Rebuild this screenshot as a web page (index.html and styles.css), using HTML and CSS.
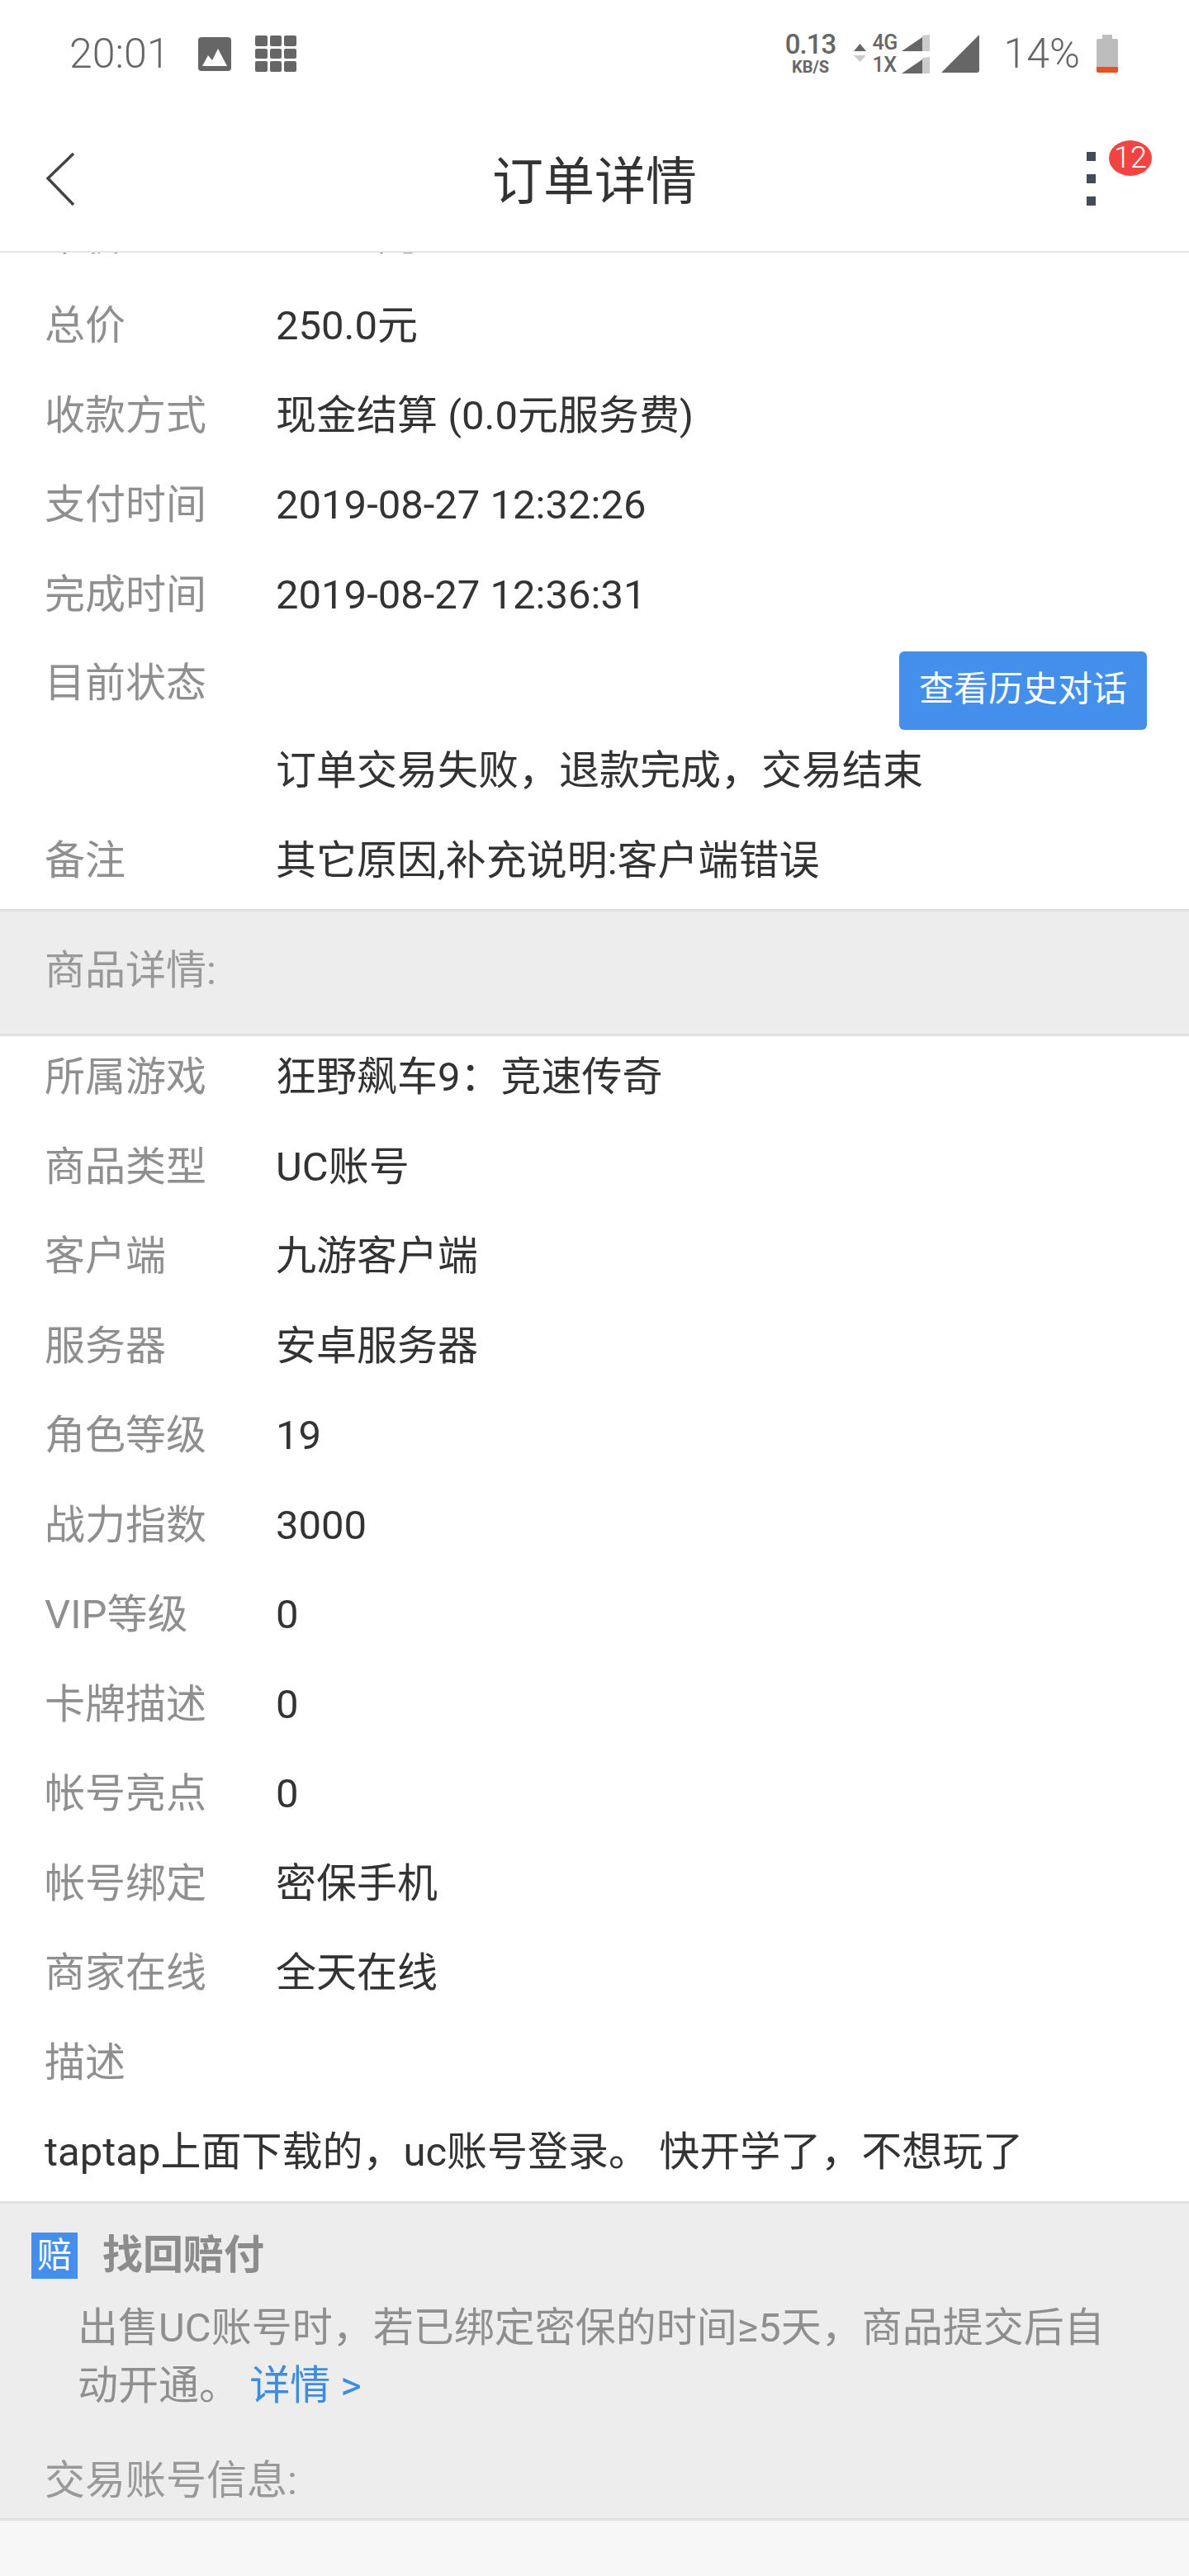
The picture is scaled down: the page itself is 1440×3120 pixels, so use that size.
FILE: index.html
```html
<!DOCTYPE html>
<html lang="zh-CN">
<head>
<meta charset="utf-8">
<title>订单详情</title>
<link rel="stylesheet" href="styles.css">
</head>
<body>
<header class="top">
  <div class="statusbar">
    <span class="time">20:01</span>
    <svg class="ic-image" width="40" height="41" viewBox="0 0 40 41"><rect width="40" height="41" rx="4" fill="#666"/><path d="M5 35 L12 22 L17 28 L24 14 L35 35 Z" fill="#fff"/></svg>
    <svg class="ic-grid" width="50" height="44" viewBox="0 0 50 44" fill="#666"><rect x="0" y="0" width="15" height="13" rx="2"/><rect x="18" y="0" width="14" height="13" rx="2"/><rect x="35" y="0" width="15" height="13" rx="2"/><rect x="0" y="16" width="15" height="12" rx="2"/><rect x="18" y="16" width="14" height="12" rx="2"/><rect x="35" y="16" width="15" height="12" rx="2"/><rect x="0" y="31" width="15" height="13" rx="2"/><rect x="18" y="31" width="14" height="13" rx="2"/><rect x="35" y="31" width="15" height="13" rx="2"/></svg>
    <div class="status-right">
      <div class="speed"><span class="speed-num">0.13</span><span class="speed-unit">KB/S</span></div>
      <svg class="ic-arrows" width="15" height="22" viewBox="0 0 15 22"><path d="M7.5 0 L15 9 H0 Z" fill="#666"/><path d="M0 14 H15 L7.5 22 Z" fill="#ccc"/></svg>
      <div class="net">
        <div class="net-line"><span class="net-label">4G</span><svg width="34" height="20" viewBox="0 0 34 20"><path d="M0 20 L25 3 V20 Z" fill="#666"/><path d="M25 1 L34 0 V20 H25 Z" fill="#ccc"/></svg></div>
        <div class="net-line"><span class="net-label">1X</span><svg width="34" height="20" viewBox="0 0 34 20"><path d="M0 20 L25 3 V20 Z" fill="#666"/><path d="M25 1 L34 0 V20 H25 Z" fill="#ccc"/></svg></div>
      </div>
      <svg class="ic-signal" width="46" height="46" viewBox="0 0 46 46"><path d="M0 46 L46 0 V43 Q46 46 43 46 Z" fill="#666"/></svg>
      <span class="battery-text">14%</span>
      <svg class="ic-battery" width="26" height="46" viewBox="0 0 26 46"><path d="M7 0 H19 V5 H24 Q26 5 26 7 V39 H0 V7 Q0 5 2 5 H7 Z" fill="#bdbdbd"/><path d="M0 39 H26 V44 Q26 46 24 46 H2 Q0 46 0 44 Z" fill="#e8501f"/></svg>
    </div>
  </div>
  <nav class="navbar">
    <div class="nav-left">
      <svg width="36" height="66" viewBox="0 0 36 66"><path d="M34 2 L3 32 L34 64" fill="none" stroke="#444" stroke-width="3.5"/></svg>
    </div>
    <h1 class="title">订单详情</h1>
    <div class="nav-right">
      <div class="dots"><i></i><i></i><i></i></div>
      <span class="badge">12</span>
    </div>
  </nav>
</header>
<main class="content">
  <section class="rows rows-order">
    <div class="row"><span class="k">单价</span><span class="v">250.0元</span></div>
    <div class="row"><span class="k">总价</span><span class="v">250.0元</span></div>
    <div class="row"><span class="k">收款方式</span><span class="v">现金结算 (0.0元服务费)</span></div>
    <div class="row"><span class="k">支付时间</span><span class="v">2019-08-27 12:32:26</span></div>
    <div class="row"><span class="k">完成时间</span><span class="v">2019-08-27 12:36:31</span></div>
    <div class="row row-status"><span class="k">目前状态</span><button class="btn">查看历史对话</button></div>
    <div class="row"><span class="k"></span><span class="v">订单交易失败，退款完成，交易结束</span></div>
    <div class="row"><span class="k">备注</span><span class="v">其它原因,补充说明:客户端错误</span></div>
  </section>
  <div class="band band-goods">商品详情:</div>
  <section class="rows rows-goods">
    <div class="row"><span class="k">所属游戏</span><span class="v">狂野飙车9：竞速传奇</span></div>
    <div class="row"><span class="k">商品类型</span><span class="v">UC账号</span></div>
    <div class="row"><span class="k">客户端</span><span class="v">九游客户端</span></div>
    <div class="row"><span class="k">服务器</span><span class="v">安卓服务器</span></div>
    <div class="row"><span class="k">角色等级</span><span class="v">19</span></div>
    <div class="row"><span class="k">战力指数</span><span class="v">3000</span></div>
    <div class="row"><span class="k">VIP等级</span><span class="v">0</span></div>
    <div class="row"><span class="k">卡牌描述</span><span class="v">0</span></div>
    <div class="row"><span class="k">帐号亮点</span><span class="v">0</span></div>
    <div class="row"><span class="k">帐号绑定</span><span class="v">密保手机</span></div>
    <div class="row"><span class="k">商家在线</span><span class="v">全天在线</span></div>
    <div class="row"><span class="k">描述</span></div>
    <div class="row"><span class="v">taptap上面下载的，uc账号登录。 快开学了，不想玩了</span></div>
  </section>
  <section class="band-info">
    <div class="pay-title"><span class="pay-tag">赔</span><strong class="pay-name">找回赔付</strong></div>
    <p class="pay-desc">出售UC账号时，若已绑定密保的时间≥5天，商品提交后自动开通。 <a class="pay-link">详情 &gt;</a></p>
    <div class="info-head">交易账号信息:</div>
  </section>
</main>
</body>
</html>
```
FILE: styles.css
```css
* { box-sizing: border-box; }
html, body { margin: 0; padding: 0; }
body {
  width: 1440px;
  height: 3120px;
  overflow: hidden;
  background: #f7f7f7;
  font-family: Roboto, "Noto Sans CJK SC", sans-serif;
}
.top { background: #fff; height: 306px; border-bottom: 2px solid #e6e6e6; }
.statusbar {
  height: 130px;
  display: flex;
  align-items: center;
  padding: 0 86px 0 84px;
  color: #666;
}
.time { font-size: 50px; font-weight: 300; line-height: 60px; }
.ic-image { margin-left: 35px; }
.ic-grid { margin-left: 29px; }
.status-right { margin-left: auto; display: flex; align-items: center; }
.speed { display: flex; flex-direction: column; align-items: center; width: 62px; }
.speed-num { font-size: 33px; font-weight: 500; line-height: 30px; letter-spacing: -1px; }
.speed-unit { font-size: 20px; font-weight: 700; line-height: 20px; margin-top: 2px; }
.ic-arrows { margin-left: 21px; margin-top: -3px; }
.net { margin-left: 8px; display: flex; flex-direction: column; gap: 7px; }
.net-line { display: flex; align-items: flex-end; height: 20px; }
.net-label { font-size: 25px; font-weight: 500; line-height: 20px; width: 35px; letter-spacing: -.5px; }
.ic-signal { margin-left: 14px; margin-top: -1px; }
.battery-text { margin-left: 30px; font-size: 50px; font-weight: 300; line-height: 60px; }
.ic-battery { margin-left: 20px; }
.navbar {
  height: 174px;
  display: grid;
  grid-template-columns: 1fr auto 1fr;
  align-items: center;
  padding: 0 55px;
}
.nav-left { display: flex; align-items: center; }
.title { margin: 0; padding-top: 8px; font-size: 62px; font-weight: 400; color: #333; line-height: 80px; }
.nav-right { position: relative; display: flex; justify-content: flex-end; height: 64px; margin-right: 58px; }
.dots { display: flex; flex-direction: column; gap: 16px; width: 11px; margin-top: -1px; }
.dots i { display: block; width: 11px; height: 11px; background: #444b5a; }
.badge {
  position: absolute;
  left: calc(100% + 16px);
  top: -15px;
  width: 52px;
  height: 43px;
  border-radius: 50%;
  background: #f44343;
  color: #fff;
  font-size: 36px;
  font-weight: 300;
  line-height: 43px;
  text-align: center;
}
.content { overflow: hidden; }
.rows { background: #fff; }
.rows-order { margin-top: -73.5px; padding-bottom: 4px; }
.rows-goods { margin-top: -4px; padding-bottom: 4.5px; }
.row {
  height: 108.5px;
  display: flex;
  align-items: center;
  padding: 0 51px 0 54px;
  font-size: 49px;
  line-height: 60px;
}
.row-status { height: 105px; }
.k { flex: 0 0 280px; color: #8f8f8f; }
.v { color: #333; white-space: nowrap; }
.btn {
  margin-left: auto;
  width: 300px;
  height: 95px;
  margin-top: 18px;
  border: 0;
  border-radius: 6px;
  background: #448fec;
  color: #fff;
  font-family: inherit;
  font-size: 42px;
  line-height: 60px;
  padding: 0 0 4px;
}
.band-goods {
  position: relative;
  z-index: 1;
  height: 154px;
  padding: 0 54px 4px;
  display: flex;
  align-items: center;
  background: #ededed;
  border-top: 3px solid #e0e0e0;
  border-bottom: 3px solid #e0e0e0;
  color: #999;
  font-size: 49px;
  line-height: 60px;
}
.band-info {
  height: 387px;
  background: #ededed;
  border-top: 3px solid #e0e0e0;
  border-bottom: 3px solid #e0e0e0;
  padding: 35px 0 0 38px;
}
.pay-title { display: flex; align-items: center; height: 56px; }
.pay-tag {
  width: 56px;
  height: 56px;
  background: #448fec;
  color: #fff;
  font-size: 42px;
  line-height: 56px;
  text-align: center;
}
.pay-name { margin-left: 30px; font-size: 49px; font-weight: 700; line-height: 60px; color: #8c8c8c; }
.pay-desc { margin: 25px 80px 0 56px; font-size: 49px; line-height: 70px; color: #8f8f8f; }
.pay-link { color: #3d8ce0; }
.info-head { margin: 45px 0 0 16px; font-size: 49px; line-height: 70px; color: #999; }
```
